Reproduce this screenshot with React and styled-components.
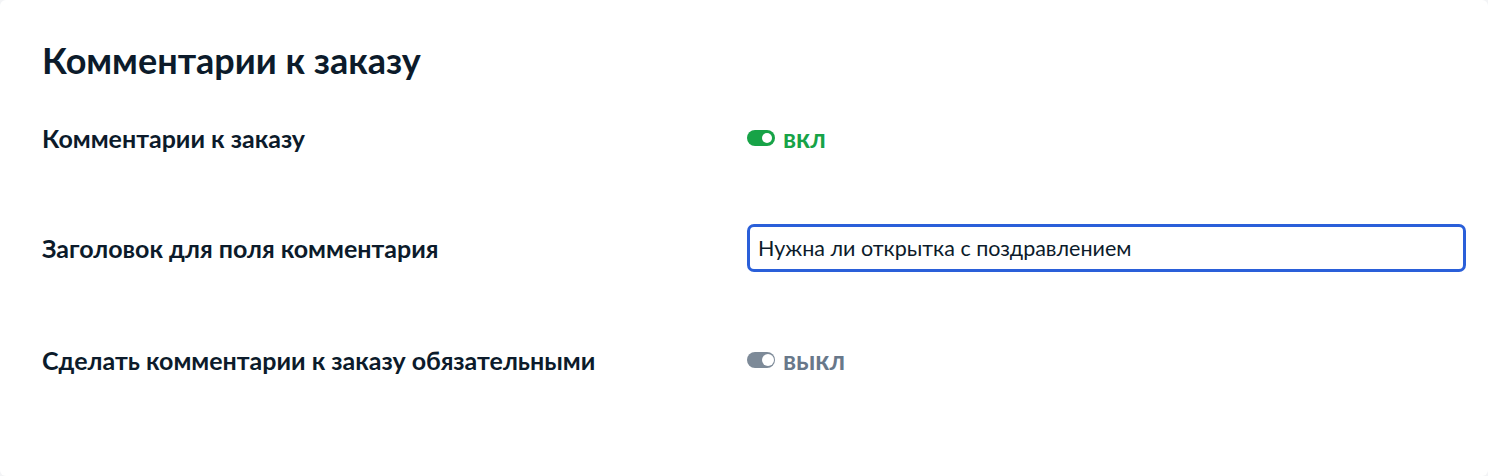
import styled, { createGlobalStyle } from "styled-components";

const GlobalStyle = createGlobalStyle`
  body {
    margin: 0;
    background: #f3f4f6;
    font-family: Lato, "Noto Sans", sans-serif;
  }
`;

const Card = styled.div`
  background: #fff;
  border-radius: 6px;
  min-height: 476px;
  box-sizing: border-box;
  padding: 39px 22px 0 42px;
`;

const Heading = styled.h1`
  margin: 0;
  font-size: 36px;
  line-height: 42px;
  font-weight: 700;
  color: #0c1b2b;
`;

const Rows = styled.div`
  display: grid;
  grid-template-columns: 705px 1fr;
  grid-template-rows: 110px 110px 114px;
  margin-top: 2px;
`;

const Label = styled.div`
  display: flex;
  align-items: center;
  font-size: 25px;
  font-weight: 700;
  color: #0c1b2b;
`;

const Control = styled.div`
  display: flex;
  align-items: center;
`;

const Toggle = styled.label`
  display: inline-flex;
  align-items: center;
  gap: 8px;
  cursor: pointer;
  font-size: 26px;
  font-weight: 700;
  color: ${(p) => (p.$on ? "#17a347" : "#68788a")};
`;

const Track = styled.span`
  position: relative;
  width: 28px;
  height: 16px;
  border-radius: 8px;
  background: ${(p) => (p.$on ? "#17a347" : "#7d8a98")};
`;

const Knob = styled.span`
  position: absolute;
  top: ${(p) => (p.$on ? "3px" : "2px")};
  right: ${(p) => (p.$on ? "3px" : "1px")};
  width: ${(p) => (p.$on ? "10px" : "12px")};
  height: ${(p) => (p.$on ? "10px" : "12px")};
  border-radius: 50%;
  background: #fff;
`;

const Input = styled.input`
  width: 100%;
  height: 48px;
  box-sizing: border-box;
  border: 3px solid #2a5fd9;
  border-radius: 7px;
  padding: 0 8px;
  font-family: Lato, "Noto Sans", sans-serif;
  font-size: 21.5px;
  color: #0c1b2b;
  outline: none;
`;

function Switch({ on }) {
  return (
    <Toggle $on={on}>
      <Track $on={on}>
        <Knob $on={on} />
      </Track>
      {on ? "вкл" : "выкл"}
    </Toggle>
  );
}

export default function App() {
  return (
    <>
      <GlobalStyle />
      <Card>
        <Heading>Комментарии к заказу</Heading>
        <Rows>
          <Label>Комментарии к заказу</Label>
          <Control>
            <Switch on />
          </Control>

          <Label>Заголовок для поля комментария</Label>
          <Control>
            <Input defaultValue="Нужна ли открытка с поздравлением" />
          </Control>

          <Label>Сделать комментарии к заказу обязательными</Label>
          <Control>
            <Switch on={false} />
          </Control>
        </Rows>
      </Card>
    </>
  );
}
